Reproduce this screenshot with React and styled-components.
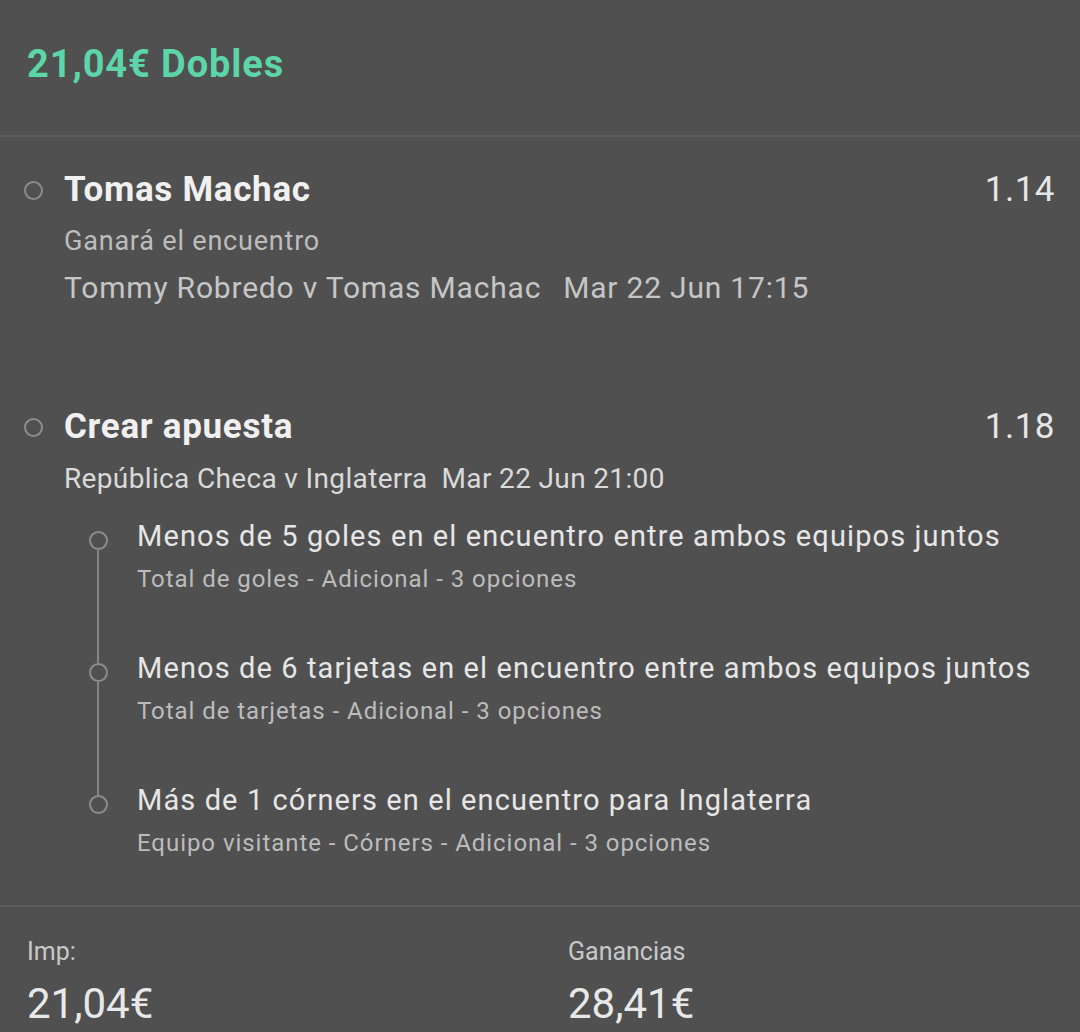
import styled, { createGlobalStyle } from 'styled-components';

const legs = [
    { title: 'Menos de 5 goles en el encuentro entre ambos equipos juntos', sub: 'Total de goles - Adicional - 3 opciones' },
    { title: 'Menos de 6 tarjetas en el encuentro entre ambos equipos juntos', sub: 'Total de tarjetas - Adicional - 3 opciones' },
    { title: 'Más de 1 córners en el encuentro para Inglaterra', sub: 'Equipo visitante - Córners - Adicional - 3 opciones' },
];

export default function App() {
    return (
        <Page>
            <GlobalStyle />
            <Header>21,04€ Dobles</Header>
            <Divider />

            <Selection>
                <Marker><Dot /></Marker>
                <Body>
                    <TitleRow>
                        <Title>Tomas Machac</Title>
                        <Odds>1.14</Odds>
                    </TitleRow>
                    <Market>Ganará el encuentro</Market>
                    <Match>
                        <span>Tommy Robredo v Tomas Machac</span>
                        <span>Mar 22 Jun 17:15</span>
                    </Match>
                </Body>
            </Selection>

            <Selection $second>
                <Marker><Dot /></Marker>
                <Body>
                    <TitleRow>
                        <Title>Crear apuesta</Title>
                        <Odds>1.18</Odds>
                    </TitleRow>
                    <Match $light>
                        <span>República Checa v Inglaterra</span>
                        <span>Mar 22 Jun 21:00</span>
                    </Match>
                </Body>
            </Selection>

            <Legs>
                {legs.map((l, i) => (
                    <Leg key={i} $last={i === legs.length - 1}>
                        <LegMarker>
                            <Segment $hidden={i === 0} $top />
                            <Dot />
                            <Segment $hidden={i === legs.length - 1} />
                        </LegMarker>
                        <LegBody>
                            <LegTitle>{l.title}</LegTitle>
                            <LegSub>{l.sub}</LegSub>
                        </LegBody>
                    </Leg>
                ))}
            </Legs>

            <Divider />

            <Footer>
                <Stat>
                    <StatLabel>Imp:</StatLabel>
                    <StatValue>21,04€</StatValue>
                </Stat>
                <Stat>
                    <StatLabel>Ganancias</StatLabel>
                    <StatValue>28,41€</StatValue>
                </Stat>
            </Footer>
        </Page>
    );
}

// Styled components

const GlobalStyle = createGlobalStyle`
    html, body {
        margin: 0;
        padding: 0;
        background: #505050;
    }
    body {
        font-family: Roboto, "Noto Sans", sans-serif;
    }
`;

const Page = styled.div`
    width: 1080px;
    height: 1032px;
    overflow: hidden;
    background: #505050;
    color: #e8e8e8;
`;

const Header = styled.div`
    box-sizing: border-box;
    height: 135px;
    padding: 44px 27px 0;
    font-size: 38px;
    line-height: 40px;
    font-weight: 700;
    letter-spacing: 0.9px;
    color: #5cd5a8;
`;

const Divider = styled.div`
    height: 2px;
    background: #5d5d5d;
`;

const Selection = styled.div`
    display: flex;
    padding: ${(p) => (p.$second ? '101px' : '33px')} 25px 0 0;
`;

const Marker = styled.div`
    width: 64px;
    display: flex;
    justify-content: center;
    padding-left: 2px;
    padding-top: 11px;
    box-sizing: border-box;
`;

const Dot = styled.div`
    width: 19px;
    height: 19px;
    box-sizing: border-box;
    border: 2px solid #8c8c8c;
    border-radius: 50%;
    flex-shrink: 0;
`;

const Body = styled.div`
    flex: 1;
    display: flex;
    flex-direction: column;
`;

const TitleRow = styled.div`
    display: flex;
    justify-content: space-between;
    align-items: baseline;
`;

const Title = styled.div`
    font-size: 35px;
    line-height: 40px;
    font-weight: 700;
    letter-spacing: 0.7px;
    color: #f0f0f0;
`;

const Odds = styled.div`
    font-size: 35px;
    line-height: 40px;
    letter-spacing: 0.5px;
    color: #e6e6e6;
`;

const Market = styled.div`
    margin-top: 14px;
    font-size: 27px;
    line-height: 34px;
    letter-spacing: 0.8px;
    color: #bdbdbd;
`;

const Match = styled.div`
    margin-top: ${(p) => (p.$light ? 14 : 12)}px;
    display: flex;
    gap: ${(p) => (p.$light ? '14px' : '22px')};
    font-size: ${(p) => (p.$light ? '28px' : '30px')};
    letter-spacing: ${(p) => (p.$light ? '0.35px' : '0.8px')};
    line-height: 36px;
    color: ${(p) => (p.$light ? '#dadada' : '#c6c6c6')};
`;

const Legs = styled.div`
    display: flex;
    flex-direction: column;
    padding: 21px 25px 47px 64px;
`;

const Leg = styled.div`
    display: flex;
    padding-bottom: ${(p) => (p.$last ? 0 : 56)}px;
`;

const LegMarker = styled.div`
    width: 68px;
    display: flex;
    flex-direction: column;
    align-items: center;
`;

const Segment = styled.div`
    width: 2px;
    background: ${(p) => (p.$hidden ? 'transparent' : '#858585')};
    flex: ${(p) => (p.$top ? '0 0 13px' : '1')};
    margin-bottom: ${(p) => (p.$top ? 0 : -56)}px;
`;

const LegBody = styled.div`
    display: flex;
    flex-direction: column;
    padding-left: 5px;
`;

const LegTitle = styled.div`
    font-size: 29px;
    line-height: 36px;
    letter-spacing: 1.1px;
    color: #e6e6e6;
`;

const LegSub = styled.div`
    margin-top: 10px;
    font-size: 24px;
    line-height: 30px;
    letter-spacing: 0.95px;
    color: #bcbcbc;
`;

const Footer = styled.div`
    display: grid;
    grid-template-columns: 541px 1fr;
    padding: 29px 27px 0;
`;

const Stat = styled.div`
    display: flex;
    flex-direction: column;
`;

const StatLabel = styled.div`
    font-size: 25px;
    line-height: 32px;
    color: #c8c8c8;
`;

const StatValue = styled.div`
    margin-top: 11px;
    font-size: 42px;
    line-height: 50px;
    color: #e8e8e8;
`;
